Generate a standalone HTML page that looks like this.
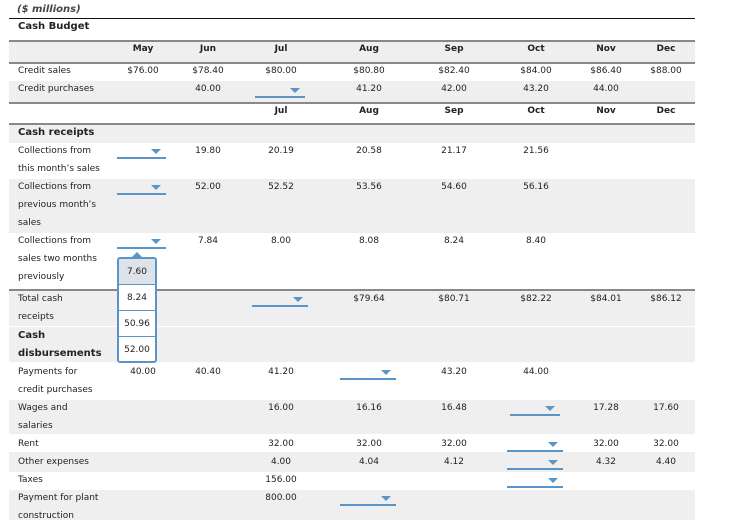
<!DOCTYPE html>
<html><head><meta charset="utf-8"><style>
body{margin:0;width:735px;height:520px;overflow:hidden;background:#fff;font-family:"DejaVu Sans","Liberation Sans",sans-serif;font-size:9px;color:#222;position:relative}
div{position:absolute}
.bg{left:9px;width:686px;background:#efefef}
.hl{left:9px;width:686px;height:2px;background:#888}
.t{line-height:12px;white-space:nowrap}
.l{left:18px}
.c{width:70px;text-align:center;margin-left:-35px}
.b{font-weight:bold}
.dd{height:2px;background:#5b95c8}
.dd:after{content:"";position:absolute;right:5px;top:-8px;border-left:5px solid transparent;border-right:5px solid transparent;border-top:5px solid #5b95c8}
</style></head><body>
<div class="t b" style="left:17px;top:4px;font-style:italic;color:#444;font-size:10px">($ millions)</div>
<div style="left:9px;top:18px;width:686px;height:1px;background:#111"></div>
<div class="t b l" style="top:21px;font-size:10px">Cash Budget</div>

<div class="bg" style="top:41px;height:21px"></div>
<div class="hl" style="top:40px"></div>
<div class="hl" style="top:62px"></div>
<div class="bg" style="top:81px;height:21px"></div>
<div class="hl" style="top:102px"></div>
<div class="hl" style="top:123px"></div>
<div class="bg" style="top:125px;height:18px"></div>
<div class="bg" style="top:179px;height:54px"></div>
<div class="hl" style="top:289px"></div>
<div class="bg" style="top:291px;height:71px"></div>
<div style="left:9px;top:326px;width:686px;height:1px;background:#fff"></div>
<div class="bg" style="top:400px;height:34px"></div>
<div class="bg" style="top:452px;height:20px"></div>
<div class="bg" style="top:490px;height:30px"></div>

<div class="t c b" style="left:143px;top:43px">May</div>
<div class="t c b" style="left:208px;top:43px">Jun</div>
<div class="t c b" style="left:281px;top:43px">Jul</div>
<div class="t c b" style="left:369px;top:43px">Aug</div>
<div class="t c b" style="left:454px;top:43px">Sep</div>
<div class="t c b" style="left:536px;top:43px">Oct</div>
<div class="t c b" style="left:606px;top:43px">Nov</div>
<div class="t c b" style="left:666px;top:43px">Dec</div>

<div class="t l" style="top:65px">Credit sales</div>
<div class="t c" style="left:143px;top:65px">$76.00</div>
<div class="t c" style="left:208px;top:65px">$78.40</div>
<div class="t c" style="left:281px;top:65px">$80.00</div>
<div class="t c" style="left:369px;top:65px">$80.80</div>
<div class="t c" style="left:454px;top:65px">$82.40</div>
<div class="t c" style="left:536px;top:65px">$84.00</div>
<div class="t c" style="left:606px;top:65px">$86.40</div>
<div class="t c" style="left:666px;top:65px">$88.00</div>

<div class="t l" style="top:83px">Credit purchases</div>
<div class="t c" style="left:208px;top:83px">40.00</div>
<div class="dd" style="left:255px;top:96px;width:50px"></div>
<div class="t c" style="left:369px;top:83px">41.20</div>
<div class="t c" style="left:454px;top:83px">42.00</div>
<div class="t c" style="left:536px;top:83px">43.20</div>
<div class="t c" style="left:606px;top:83px">44.00</div>

<div class="t c b" style="left:281px;top:105px">Jul</div>
<div class="t c b" style="left:369px;top:105px">Aug</div>
<div class="t c b" style="left:454px;top:105px">Sep</div>
<div class="t c b" style="left:536px;top:105px">Oct</div>
<div class="t c b" style="left:606px;top:105px">Nov</div>
<div class="t c b" style="left:666px;top:105px">Dec</div>

<div class="t l b" style="top:127px;font-size:10px">Cash receipts</div>

<div class="t l" style="top:142px;line-height:18px">Collections from<br>this month’s sales</div>
<div class="dd" style="left:117px;top:157px;width:49px"></div>
<div class="t c" style="left:208px;top:145px">19.80</div>
<div class="t c" style="left:281px;top:145px">20.19</div>
<div class="t c" style="left:369px;top:145px">20.58</div>
<div class="t c" style="left:454px;top:145px">21.17</div>
<div class="t c" style="left:536px;top:145px">21.56</div>

<div class="t l" style="top:178px;line-height:18px">Collections from<br>previous month’s<br>sales</div>
<div class="dd" style="left:117px;top:193px;width:49px"></div>
<div class="t c" style="left:208px;top:181px">52.00</div>
<div class="t c" style="left:281px;top:181px">52.52</div>
<div class="t c" style="left:369px;top:181px">53.56</div>
<div class="t c" style="left:454px;top:181px">54.60</div>
<div class="t c" style="left:536px;top:181px">56.16</div>

<div class="t l" style="top:232px;line-height:18px">Collections from<br>sales two months<br>previously</div>
<div class="dd" style="left:117px;top:247px;width:49px"></div>
<div class="t c" style="left:208px;top:235px">7.84</div>
<div class="t c" style="left:281px;top:235px">8.00</div>
<div class="t c" style="left:369px;top:235px">8.08</div>
<div class="t c" style="left:454px;top:235px">8.24</div>
<div class="t c" style="left:536px;top:235px">8.40</div>

<div class="t l" style="top:290px;line-height:18px">Total cash<br>receipts</div>
<div class="dd" style="left:252px;top:305px;width:56px"></div>
<div class="t c" style="left:369px;top:293px">$79.64</div>
<div class="t c" style="left:454px;top:293px">$80.71</div>
<div class="t c" style="left:536px;top:293px">$82.22</div>
<div class="t c" style="left:606px;top:293px">$84.01</div>
<div class="t c" style="left:666px;top:293px">$86.12</div>

<div class="t l b" style="top:327px;line-height:18px;font-size:10px">Cash<br>disbursements</div>

<div class="t l" style="top:363px;line-height:18px">Payments for<br>credit purchases</div>
<div class="t c" style="left:143px;top:366px">40.00</div>
<div class="t c" style="left:208px;top:366px">40.40</div>
<div class="t c" style="left:281px;top:366px">41.20</div>
<div class="dd" style="left:340px;top:378px;width:56px"></div>
<div class="t c" style="left:454px;top:366px">43.20</div>
<div class="t c" style="left:536px;top:366px">44.00</div>

<div class="t l" style="top:399px;line-height:18px">Wages and<br>salaries</div>
<div class="t c" style="left:281px;top:402px">16.00</div>
<div class="t c" style="left:369px;top:402px">16.16</div>
<div class="t c" style="left:454px;top:402px">16.48</div>
<div class="dd" style="left:510px;top:414px;width:50px"></div>
<div class="t c" style="left:606px;top:402px">17.28</div>
<div class="t c" style="left:666px;top:402px">17.60</div>

<div class="t l" style="top:438px">Rent</div>
<div class="t c" style="left:281px;top:438px">32.00</div>
<div class="t c" style="left:369px;top:438px">32.00</div>
<div class="t c" style="left:454px;top:438px">32.00</div>
<div class="dd" style="left:507px;top:450px;width:56px"></div>
<div class="t c" style="left:606px;top:438px">32.00</div>
<div class="t c" style="left:666px;top:438px">32.00</div>

<div class="t l" style="top:456px">Other expenses</div>
<div class="t c" style="left:281px;top:456px">4.00</div>
<div class="t c" style="left:369px;top:456px">4.04</div>
<div class="t c" style="left:454px;top:456px">4.12</div>
<div class="dd" style="left:507px;top:468px;width:56px"></div>
<div class="t c" style="left:606px;top:456px">4.32</div>
<div class="t c" style="left:666px;top:456px">4.40</div>

<div class="t l" style="top:474px">Taxes</div>
<div class="t c" style="left:281px;top:474px">156.00</div>
<div class="dd" style="left:507px;top:486px;width:56px"></div>

<div class="t l" style="top:489px;line-height:18px">Payment for plant<br>construction</div>
<div class="t c" style="left:281px;top:492px">800.00</div>
<div class="dd" style="left:340px;top:504px;width:56px"></div>

<div style="left:131px;top:252px;border-left:6px solid transparent;border-right:6px solid transparent;border-bottom:6px solid #5b95c8"></div>
<div style="left:117px;top:257px;width:36px;height:102px;border:2px solid #5b95c8;border-radius:3px;background:#fff;overflow:hidden">
<div style="left:0;top:0;width:36px;height:25px;background:#dde3e8;border-bottom:1px solid #5b95c8"></div>
<div class="t" style="left:0;top:7px;width:36px;text-align:center">7.60</div>
<div style="left:0;top:51px;width:36px;height:1px;background:#5b95c8"></div>
<div class="t" style="left:0;top:33px;width:36px;text-align:center">8.24</div>
<div style="left:0;top:77px;width:36px;height:1px;background:#5b95c8"></div>
<div class="t" style="left:0;top:59px;width:36px;text-align:center">50.96</div>
<div class="t" style="left:0;top:85px;width:36px;text-align:center">52.00</div>
</div>
</body></html>
